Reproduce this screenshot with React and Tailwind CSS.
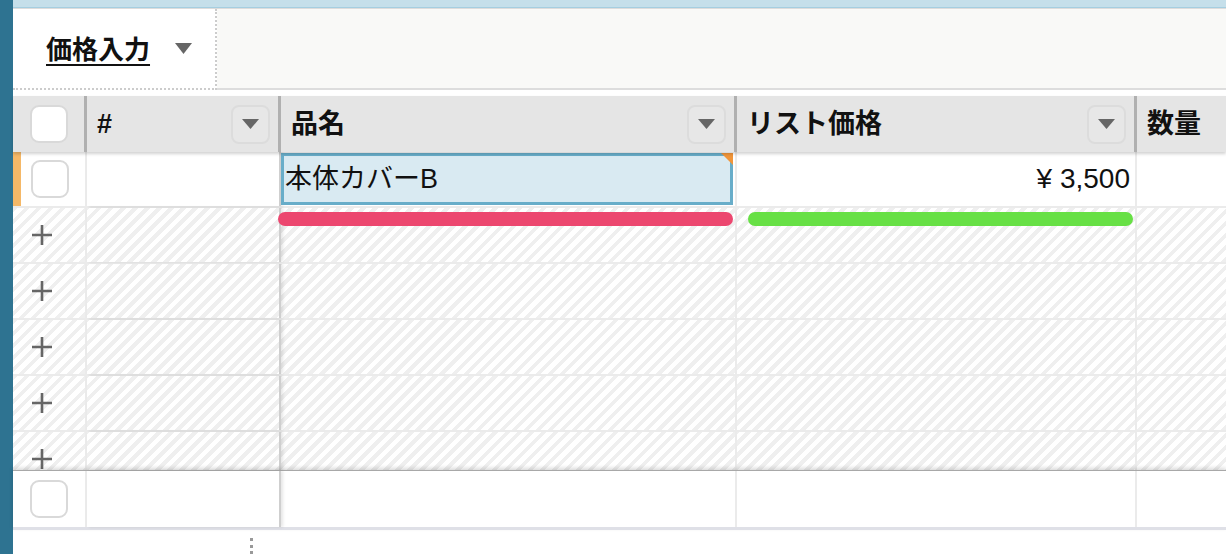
import React from 'react';

const FONT = "font-['Liberation_Sans','Noto_Sans_CJK_JP',sans-serif]";
const STRIPES =
  'bg-[repeating-linear-gradient(-45deg,#efefef_0px,#efefef_4px,#ffffff_4px,#ffffff_8.5px)]';

function Checkbox() {
  return <div className="h-[38px] w-[38px] rounded-[9px] border-2 border-[#d9d9d9] bg-white" />;
}

function DropButton() {
  return (
    <div className="flex h-[39px] w-[39px] items-center justify-center rounded-[8px] border-2 border-[#dcdcdc] bg-[#e7e7e7]">
      <svg width="17" height="10" viewBox="0 0 17 10">
        <path d="M0 0h17L8.5 10z" fill="#666" />
      </svg>
    </div>
  );
}

function Plus() {
  return (
    <svg width="20" height="20" viewBox="0 0 20 20">
      <path d="M10 0v20M0 10h20" stroke="#666" strokeWidth="2.6" />
    </svg>
  );
}

function HeaderCell({ label, width, button }) {
  return (
    <div className={`flex h-full shrink-0 items-center border-r-[3px] border-[#b0b0b0] pl-[10px] pr-[8px] ${width}`}>
      <span className="flex-1 text-[27px] font-bold text-[#111]">{label}</span>
      {button && <DropButton />}
    </div>
  );
}

function EmptyRow({ plus }) {
  return (
    <div className={`flex h-[56px] shrink-0 border-b-2 border-[#ebebeb] ${STRIPES}`}>
      <div className="flex w-[74px] shrink-0 items-center border-r-2 border-[#ebebeb] pl-[19px]">
        {plus && <Plus />}
      </div>
      <div className="w-[194px] shrink-0 border-r-2 border-[#cfcfcf] shadow-[2px_0_3px_rgba(0,0,0,0.1)]" />
      <div className="w-[456px] shrink-0 border-r-2 border-[#ebebeb]" />
      <div className="w-[400px] shrink-0 border-r-2 border-[#ebebeb]" />
      <div className="flex-1" />
    </div>
  );
}

export default function App() {
  return (
    <div className={`flex h-[554px] w-[1226px] overflow-hidden bg-white ${FONT}`}>
      {/* side rail */}
      <div className="w-[13px] shrink-0 bg-[#2e7391]" />

      <div className="flex min-w-0 flex-1 flex-col">
        {/* top strip */}
        <div className="h-[7px] shrink-0 bg-[#c5dfea]" />
        <div className="h-[1px] shrink-0 bg-[#a5cee0]" />
        <div className="h-[1px] shrink-0 bg-[#dcdcdc]" />

        {/* tabs */}
        <div className="flex h-[81px] shrink-0">
          <div className="flex w-[204px] shrink-0 items-center border-r-2 border-b-2 border-dotted border-[#cccccc] bg-white pt-[4px] pl-[33px]">
            <span className="text-[26px] font-bold text-[#111] underline decoration-2 underline-offset-[5px]">価格入力</span>
            <svg className="ml-[25px] mt-[-4px]" width="17" height="11" viewBox="0 0 17 11">
              <path d="M0 0h17L8.5 11z" fill="#666" />
            </svg>
          </div>
          <div className="flex-1 border-b-2 border-[#dddddd] bg-[#f9f9f7]" />
        </div>
        <div className="h-[6px] shrink-0 bg-white" />

        {/* header */}
        <div className="relative z-10 flex h-[56px] shrink-0 bg-[#e5e5e5] shadow-[0_2px_3px_rgba(0,0,0,0.18)]">
          <div className="flex w-[74px] shrink-0 items-center justify-center border-r-[3px] border-[#b0b0b0]">
            <Checkbox />
          </div>
          <HeaderCell label="#" width="w-[194px]" button />
          <HeaderCell label="品名" width="w-[456px]" button />
          <HeaderCell label="リスト価格" width="w-[400px]" button />
          <div className="flex flex-1 items-center pl-[10px]">
            <span className="text-[27px] font-bold text-[#111]">数量</span>
          </div>
        </div>

        {/* body */}
        <div className="flex h-[318px] shrink-0 flex-col overflow-hidden">
          <div className="relative flex h-[56px] shrink-0 border-b-2 border-[#ebebeb] bg-white">
            <div className="flex w-[74px] shrink-0 items-center border-r-2 border-[#ebebeb]">
              <div className="h-full w-[8px] bg-[#f5b867]" />
              <div className="ml-[10px]">
                <Checkbox />
              </div>
            </div>
            <div className="w-[194px] shrink-0 border-r-2 border-[#cfcfcf] shadow-[2px_0_3px_rgba(0,0,0,0.1)]" />
            <div className="w-[456px] shrink-0 border-r-2 border-[#ebebeb] pt-[1px] pr-[2px]">
              <div className="relative flex h-[52px] items-center border-[3px] border-[#68adc9] bg-[#d9eaf2] pl-[1px]">
                <span className="text-[27px] text-[#111]">本体カバーB</span>
                <div className="absolute top-[-3px] right-[-3px] h-0 w-0 border-t-[12px] border-l-[12px] border-t-[#f0953a] border-l-transparent" />
              </div>
            </div>
            <div className="flex w-[400px] shrink-0 items-center justify-end border-r-2 border-[#ebebeb] pr-[5px]">
              <span className="text-[28px] text-[#111]">¥ 3,500</span>
            </div>
            <div className="flex-1" />
          </div>

          <div className="relative">
            <EmptyRow plus />
            <div className="absolute top-[4px] left-[265px] h-[14px] w-[455px] rounded-full bg-[#ec476f]" />
            <div className="absolute top-[4px] left-[735px] h-[14px] w-[385px] rounded-full bg-[#67e045]" />
          </div>
          <EmptyRow plus />
          <EmptyRow plus />
          <EmptyRow plus />
          <EmptyRow plus />
        </div>

        {/* footer row */}
        <div className="relative z-10 flex h-[60px] shrink-0 border-t border-[#a8a8a8] border-b-[3px] border-b-[#dfe0e7] bg-white shadow-[0_-2px_4px_rgba(0,0,0,0.15)]">
          <div className="flex w-[74px] shrink-0 items-center justify-center border-r-2 border-[#ebebeb]">
            <Checkbox />
          </div>
          <div className="w-[194px] shrink-0 border-r-2 border-[#cfcfcf] shadow-[2px_0_3px_rgba(0,0,0,0.1)]" />
          <div className="w-[456px] shrink-0 border-r-2 border-[#ebebeb]" />
          <div className="w-[400px] shrink-0 border-r-2 border-[#ebebeb]" />
          <div className="flex-1" />
        </div>

        <div className="flex-1 pt-[8px] pl-[237px]">
          <div className="h-[16px] w-0 border-l-[3px] border-dotted border-[#999]" />
        </div>
      </div>
    </div>
  );
}
